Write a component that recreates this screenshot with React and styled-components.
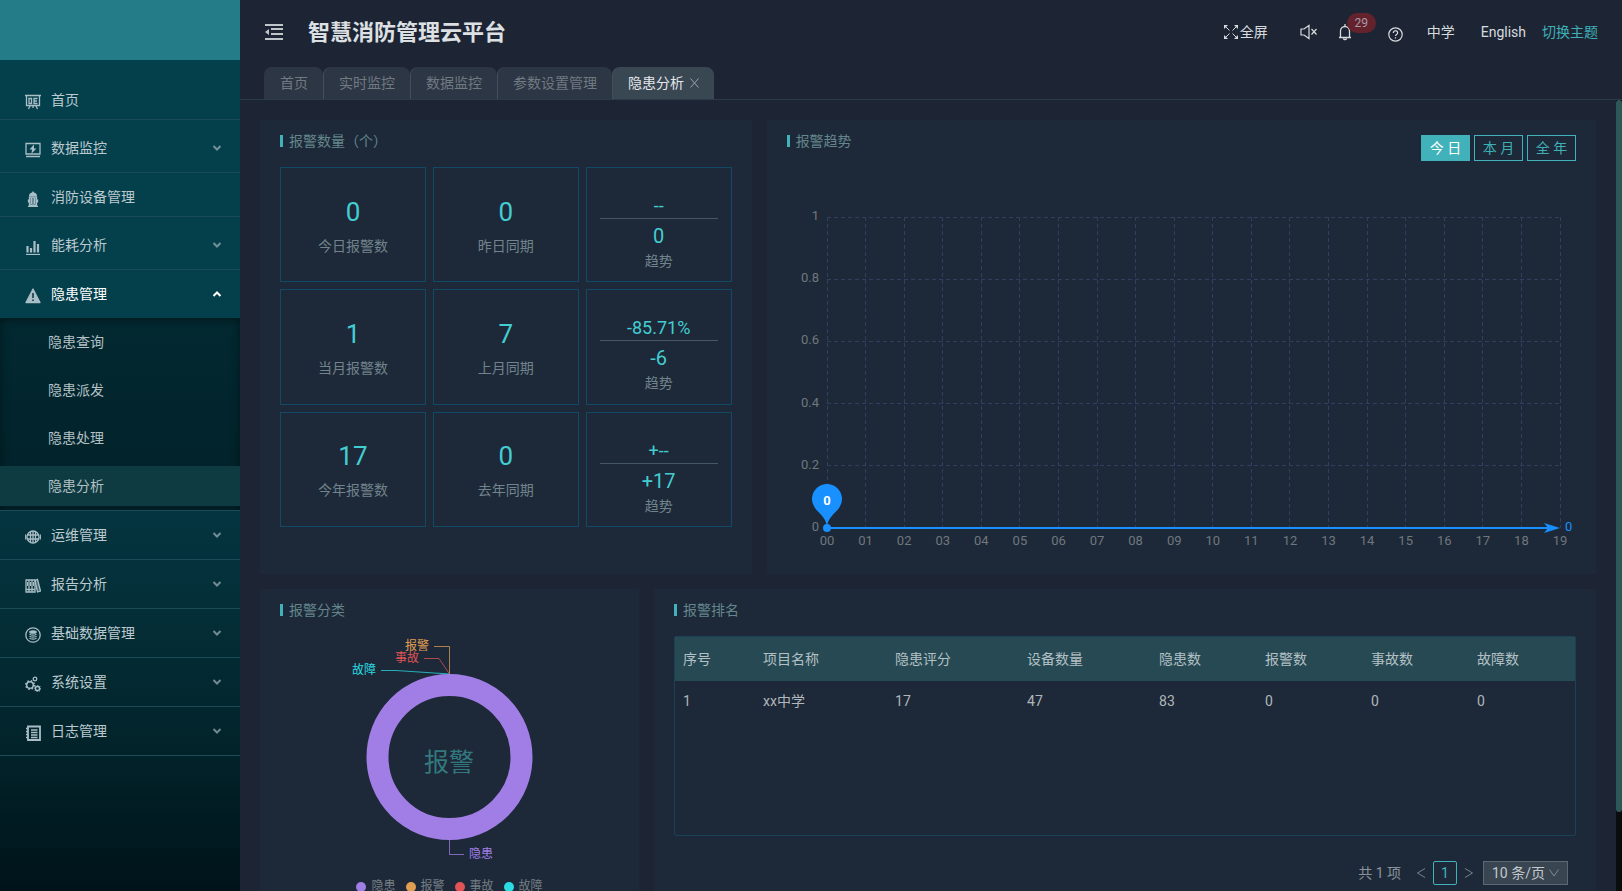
import React, { useEffect, useRef, useState } from 'react';
import styled, { createGlobalStyle } from 'styled-components';

const menus = [
  { key: 'home', name: '首页', icon: 'home', single: true },
  { key: 'data', name: '数据监控', icon: 'monitor', spaced: true },
  { key: 'device', name: '消防设备管理', icon: 'hydrant', single: true },
  { key: 'energy', name: '能耗分析', icon: 'bars' },
  {
    key: 'danger',
    name: '隐患管理',
    icon: 'warning',
    children: ['隐患查询', '隐患派发', '隐患处理', '隐患分析'],
  },
  { key: 'ops', name: '运维管理', icon: 'globe' },
  { key: 'report', name: '报告分析', icon: 'books' },
  { key: 'base', name: '基础数据管理', icon: 'database' },
  { key: 'system', name: '系统设置', icon: 'gears' },
  { key: 'log', name: '日志管理', icon: 'log' },
];

const tabs = ['首页', '实时监控', '数据监控', '参数设置管理', '隐患分析'];

const counts = [
  { value: '0', label: '今日报警数' },
  { value: '0', label: '昨日同期' },
  { rate: '--', value: '0', label: '趋势' },
  { value: '1', label: '当月报警数' },
  { value: '7', label: '上月同期' },
  { rate: '-85.71%', value: '-6', label: '趋势' },
  { value: '17', label: '今年报警数' },
  { value: '0', label: '去年同期' },
  { rate: '+--', value: '+17', label: '趋势' },
];

const legends = [
  { name: '隐患', color: '#a07ee6' },
  { name: '报警', color: '#e09e52' },
  { name: '事故', color: '#e05455' },
  { name: '故障', color: '#2adce4' },
];

const columns = [
  { title: '序号', width: 80 },
  { title: '项目名称', width: 132 },
  { title: '隐患评分', width: 132 },
  { title: '设备数量', width: 132 },
  { title: '隐患数', width: 106 },
  { title: '报警数', width: 106 },
  { title: '事故数', width: 106 },
  { title: '故障数', width: 106 },
];

const rows = [['1', 'xx中学', '17', '47', '83', '0', '0', '0']];

const MenuIcon = ({ name }) => {
  const shapes = {
    home: (
      <>
        <path d="M0 1.500h16M1.500 2v9.500h13V2M5 12l-1.500 3M11 12l1.500 3M8 12v2" />
        <path d="M4 4.500v5h2.500v-5zM12.500 4.500H9v5h3.500M9 7h3" />
      </>
    ),
    monitor: (
      <>
        <path d="M1 1.500h14v10.500H1zM1 14.500h14" />
        <path d="M9 2.500L4.500 7.500h2.500L6.500 11.500l5-5H9z" fill="currentColor" stroke="none" />
      </>
    ),
    hydrant: (
      <>
        <path d="M8 0l1 1.500c2 .5 3 1.500 3 3.500H4c0-2 1-3 3-3.500z" fill="currentColor" stroke="none" />
        <path d="M4.500 6h7v8.500h-7z" fill="currentColor" fillOpacity=".55" />
        <path d="M3.500 8.500v3M12.500 8.500v3M3 15.500h10M6.500 7v6M9.500 7v6" />
      </>
    ),
    bars: (
      <>
        <path d="M1 15.500h14" />
        <path d="M2.500 7v6.500M6 9v4.500M9.500 2v11.500M13 5v8.500" strokeWidth="2.200" />
      </>
    ),
    warning: (
      <>
        <path d="M8 1l7 13.500H1z" fill="currentColor" strokeLinejoin="round" />
        <path d="M8 5v5M8 11.500v1.500" stroke="#04323d" strokeWidth="1.500" />
      </>
    ),
    globe: (
      <>
        <circle cx="8" cy="8" r="6" />
        <path d="M8 2v12M5.500 3v10M10.500 3v10M2 6h12M2 10h12M.7 5.500v5M15.300 5.500v5" />
      </>
    ),
    books: (
      <>
        <path d="M1 2h9v12H1zM4 2v12M7 2v12M1 11.500h9" />
        <path d="M2.500 4v4M5.500 4v4M8.500 4v4" strokeWidth="1" />
        <path d="M10 2.500l2.500-1L15.500 13l-3 1z" fill="currentColor" fillOpacity=".4" />
      </>
    ),
    database: (
      <>
        <circle cx="8" cy="8" r="7.200" />
        <ellipse cx="8" cy="5" rx="3.200" ry="1.200" fill="currentColor" />
        <path d="M4.500 7c1 1.500 6 1.500 7 0M4.500 9c1 1.500 6 1.500 7 0M4.500 11c1 1.500 6 1.500 7 0" />
      </>
    ),
    gears: (
      <>
        <circle cx="5" cy="9" r="3.300" strokeWidth="1.500" />
        <circle cx="5" cy="9" r="4.400" strokeDasharray="1.500 2" />
        <circle cx="10" cy="3" r="1.800" />
        <circle cx="12.500" cy="12.500" r="2" />
        <circle cx="12.500" cy="12.500" r="2.900" strokeDasharray="1 1.200" />
      </>
    ),
    log: (
      <>
        <path d="M3 1.500h12v13.500H3z" strokeWidth="1.800" />
        <path d="M6 5h6.500M6 7.500h6.500M6 10h6.500M6 12.500h6.500M1 3.500h2M1 6.500h2M1 9.500h2M1 12.500h2" />
      </>
    ),
  };
  return (
    <MenuSvg viewBox="0 0 16 16" aria-hidden="true">
      {shapes[name]}
    </MenuSvg>
  );
};

const Sidebar = () => (
  <Aside>
    <Logo />
    <ul>
      {menus.map((menu) => (
        <MenuItem key={menu.key} $spaced={menu.single || menu.spaced}>
          <MenuButton $single={menu.single} $open={!!menu.children}>
            <MenuIcon name={menu.icon} />
            <span>{menu.name}</span>
            {!menu.single && (
              <Arrow viewBox="0 0 10 10" $open={!!menu.children} aria-hidden="true">
                <path d={menu.children ? 'M1.500 7L5 3.500 8.500 7' : 'M1.500 3L5 6.500 8.500 3'} />
              </Arrow>
            )}
          </MenuButton>
          {menu.children && (
            <SubMenu>
              {menu.children.map((child) => (
                <li key={child}>
                  <SubButton $active={child === '隐患分析'}>{child}</SubButton>
                </li>
              ))}
            </SubMenu>
          )}
        </MenuItem>
      ))}
    </ul>
  </Aside>
);

const TopBar = () => (
  <Top>
    <FoldButton aria-label="fold">
      <svg width="18" height="16" viewBox="0 0 18 16" aria-hidden="true">
        <path d="M0 0h18v2H0zM6 4h12v2H6zM6 9h12v2H6zM0 14h18v2H0zM0 8l4-3v6z" fill="currentColor" />
      </svg>
    </FoldButton>
    <PlatformTitle>智慧消防管理云平台</PlatformTitle>
    <Tool $gap={0}>
      <svg width="14" height="14" viewBox="0 0 14 14" fill="none" stroke="currentColor" aria-hidden="true">
        <path d="M1 1l4.500 4.500M13 1L8.500 5.500M1 13l4.500-4.500M13 13L8.500 8.500" />
        <path d="M0 0h4L0 4zM14 0h-4l4 4zM0 14h4l-4-4zM14 14h-4l4-4z" fill="currentColor" stroke="none" />
      </svg>
      全屏
    </Tool>
    <Tool $gap={32} aria-label="mute">
      <svg width="18" height="16" viewBox="0 0 18 16" fill="none" stroke="currentColor" aria-hidden="true">
        <path d="M1 5h3l5-3.500v13L4 11H1zM11.500 5l5 5.500M16.500 5l-5 5.500" strokeWidth="1.200" />
      </svg>
    </Tool>
    <Tool $gap={20} aria-label="notice">
      <svg width="14" height="18" viewBox="0 0 14 18" fill="none" stroke="currentColor" aria-hidden="true">
        <path d="M1 14.500h12M2.500 14.500V8a4.500 4.500 0 0 1 9 0v6.500M7 3.500V1M5.500 15.500c.3 1.500 2.700 1.500 3 0" strokeWidth="1.300" />
      </svg>
      <Badge>29</Badge>
    </Tool>
    <Tool $gap={36} aria-label="help">
      <HelpSvg viewBox="0 0 15 15" fill="none" stroke="currentColor" aria-hidden="true">
        <circle cx="7.500" cy="7.500" r="6.700" strokeWidth="1.200" />
        <path d="M5.300 6c0-3 4.400-3 4.400-.2C9.700 7.500 7.500 7.300 7.500 9M7.500 10.200v1.300" strokeWidth="1.200" />
      </HelpSvg>
    </Tool>
    <Tool $gap={24}>中学</Tool>
    <Tool $gap={26}>English</Tool>
    <Tool $gap={16} $theme>切换主题</Tool>
  </Top>
);

const TabBar = () => (
  <Tabs>
    {tabs.map((tab) => {
      const active = tab === '隐患分析';
      return (
        <Tab key={tab} $active={active}>
          {tab}
          {active && (
            <svg width="10" height="10" viewBox="0 0 10 10" stroke="#98a3ac" aria-hidden="true">
              <path d="M1.500 .5l8 9M9.500 .5l-8 9" />
            </svg>
          )}
        </Tab>
      );
    })}
  </Tabs>
);

const TrendChart = () => {
  const boxRef = useRef();
  const [width, setWidth] = useState(789);

  useEffect(() => {
    const resize = () => setWidth(boxRef.current.clientWidth);
    resize();
    window.addEventListener('resize', resize);
    return () => window.removeEventListener('resize', resize);
  }, []);

  const left = 40;
  const right = width - 16;
  const top = 56;
  const bottom = 367;
  const stepX = (right - left) / 19;
  const stepY = (bottom - top) / 5;
  const hours = Array.from({ length: 20 }, (_, i) => String(i).padStart(2, '0'));

  return (
    <div ref={boxRef}>
      <Chart width={width} height="393">
        <g stroke="#303f60" strokeDasharray="4 3" shapeRendering="crispEdges">
          {[1, 2, 3, 4, 5].map((i) => (
            <line key={i} x1={left} x2={right} y1={bottom - i * stepY} y2={bottom - i * stepY} />
          ))}
          {hours.map((hour, i) => (
            <line key={hour} x1={left + i * stepX} x2={left + i * stepX} y1={top} y2={bottom} />
          ))}
        </g>
        {['0', '0.2', '0.4', '0.6', '0.8', '1'].map((label, i) => (
          <AxisText key={label} x={left - 8} y={bottom - i * stepY + 3} textAnchor="end">
            {label}
          </AxisText>
        ))}
        {hours.map((hour, i) => (
          <AxisText key={hour} x={left + i * stepX} y={bottom + 17} textAnchor="middle">
            {hour}
          </AxisText>
        ))}
        <line x1={left} x2={right - 6} y1={bottom} y2={bottom} stroke="#1890ff" strokeWidth="2" />
        <circle cx={left} cy={bottom} r="4" fill="#1890ff" />
        <path
          transform={`translate(${left} ${bottom})`}
          d="M-12.500 -20.700A15 15 0 1 1 12.500 -20.700C8 -14 2 -12 0 -2C-2 -12 -8 -14 -12.500 -20.700z"
          fill="#1890ff"
        />
        <PinText x={left} y={bottom - 23} textAnchor="middle">0</PinText>
        <path transform={`translate(${right} ${bottom})`} d="M0 0L-16 -5L-12 0L-16 5z" fill="#1890ff" />
        <AxisText x={right + 5} y={bottom + 3} $blue>0</AxisText>
      </Chart>
    </div>
  );
};

const PieChart = () => (
  <PieBox>
    <Chart width="300" height="240">
      <circle cx="149.500" cy="121" r="72" fill="none" stroke="#a07ee6" strokeWidth="22" />
      <g fill="none" strokeOpacity=".75">
        <path d="M149.500 38V10.500H134" stroke="#e09e52" />
        <path d="M149.500 38L139 22.500H124" stroke="#e05455" />
        <path d="M149.500 38L96 34.500H81" stroke="#2adce4" />
        <path d="M149.500 204v14.500H164" stroke="#a07ee6" />
      </g>
      <PieText x="129" y="14" textAnchor="end" fill="#e09e52">报警</PieText>
      <PieText x="119" y="26" textAnchor="end" fill="#e05455">事故</PieText>
      <PieText x="76" y="38" textAnchor="end" fill="#2adce4">故障</PieText>
      <PieText x="169" y="222" fill="#a07ee6">隐患</PieText>
      <PieCenter x="149" y="135" textAnchor="middle">报警</PieCenter>
    </Chart>
    <Legend>
      {legends.map((item) => (
        <LegendItem key={item.name} $color={item.color}>{item.name}</LegendItem>
      ))}
    </Legend>
  </PieBox>
);

const RankTable = () => (
  <>
    <TableBox>
      <Table>
        <colgroup>
          {columns.map((col) => (
            <col key={col.title} width={col.width} />
          ))}
        </colgroup>
        <thead>
          <tr>
            {columns.map((col) => (
              <th key={col.title}>{col.title}</th>
            ))}
          </tr>
        </thead>
        <tbody>
          {rows.map((row) => (
            <tr key={row[0]}>
              {row.map((cell, i) => (
                <td key={i}>{cell}</td>
              ))}
            </tr>
          ))}
        </tbody>
      </Table>
    </TableBox>
    <Pagination>
      <Total>共 1 项</Total>
      <PageArrow aria-label="prev">
        <svg width="10" height="10" viewBox="0 0 10 10" aria-hidden="true"><path d="M9 .5L1.500 5 9 9.500" /></svg>
      </PageArrow>
      <PageNumber>1</PageNumber>
      <PageArrow aria-label="next">
        <svg width="10" height="10" viewBox="0 0 10 10" aria-hidden="true"><path d="M1 .5L8.500 5 1 9.500" /></svg>
      </PageArrow>
      <SizeBox>
        <select aria-label="page size" defaultValue="10">
          <option value="10">10 条/页</option>
          <option value="20">20 条/页</option>
        </select>
        <svg width="10" height="10" viewBox="0 0 10 10" aria-hidden="true"><path d="M.5 1.500L5 8l4.500-6.500" /></svg>
      </SizeBox>
    </Pagination>
  </>
);

const App = () => (
  <>
    <GlobalStyle />
    <Layout>
      <Sidebar />
      <Main>
        <TopBar />
        <TabBar />
        <Body>
          <Content>
            <Card $span={9}>
              <CardHead><CardTitle>报警数量（个）</CardTitle></CardHead>
              <CountGrid>
                {counts.map((item, i) =>
                  item.rate ? (
                    <TrendCell key={i}>
                      <Rate>{item.rate}</Rate>
                      <Diff>{item.value}</Diff>
                      <CellLabel>{item.label}</CellLabel>
                    </TrendCell>
                  ) : (
                    <CountCell key={i}>
                      <Count>{item.value}</Count>
                      <CellLabel>{item.label}</CellLabel>
                    </CountCell>
                  )
                )}
              </CountGrid>
            </Card>
            <Card $span={15}>
              <CardHead $tools>
                <CardTitle>报警趋势</CardTitle>
                <RangeGroup>
                  <RangeButton $active>今 日</RangeButton>
                  <RangeButton>本 月</RangeButton>
                  <RangeButton>全 年</RangeButton>
                </RangeGroup>
              </CardHead>
              <TrendChart />
            </Card>
            <Card $span={7}>
              <CardHead><CardTitle>报警分类</CardTitle></CardHead>
              <PieChart />
            </Card>
            <Card $span={17}>
              <CardHead><CardTitle>报警排名</CardTitle></CardHead>
              <RankTable />
            </Card>
          </Content>
          <ScrollTrack><ScrollThumb /></ScrollTrack>
        </Body>
      </Main>
    </Layout>
  </>
);

const GlobalStyle = createGlobalStyle`
  * {
    box-sizing: border-box;
  }
  body {
    margin: 0;
    background: #1d2535;
    font-family: Roboto, "Noto Sans CJK SC", sans-serif;
    font-size: 14px;
    line-height: 21px;
    color: #aeb5bc;
  }
  button, select {
    font: inherit;
    color: inherit;
    background: none;
    border: none;
    padding: 0;
    cursor: pointer;
  }
  ul {
    list-style: none;
    margin: 0;
    padding: 0;
  }
`;

const Layout = styled.div`
  display: flex;
  height: 100vh;
  overflow: hidden;
`;

const Aside = styled.aside`
  flex: 0 0 240px;
  background: linear-gradient(#043f4c 0%, #043f4c 35%, #04303a 66%, #02232a 84%, #00131a 100%);
`;

const Logo = styled.div`
  height: 60px;
  margin-bottom: 20px;
  background: #237c87;
`;

const MenuItem = styled.li`
  margin-bottom: ${(props) => (props.$spaced ? 4 : 0)}px;
  border-bottom: 1px solid #1a4b57;
`;

const MenuButton = styled.button`
  display: flex;
  align-items: center;
  gap: 10px;
  width: 100%;
  height: ${(props) => (props.$single ? 39 : 48)}px;
  padding: ${(props) => (props.$single ? 2 : 0)}px 18px 0 25px;
  color: ${(props) => (props.$open ? '#fff' : '#bccacf')};
`;

const MenuSvg = styled.svg`
  width: 16px;
  height: 16px;
  margin-top: 3px;
  fill: none;
  stroke: currentColor;
  stroke-width: 1.3;
  color: #a9bec6;
`;

const Arrow = styled.svg`
  width: 10px;
  height: 10px;
  margin-left: auto;
  fill: none;
  stroke: currentColor;
  stroke-width: 2;
  opacity: ${(props) => (props.$open ? 1 : 0.6)};
`;

const SubMenu = styled.ul`
  padding: 4px 0;
  background: rgba(0, 0, 0, 0.35);
  box-shadow: inset 0 2px 8px rgba(0, 0, 0, 0.45);
  li + li {
    margin-top: 8px;
  }
`;

const SubButton = styled.button`
  display: block;
  width: 100%;
  height: 40px;
  padding-left: 48px;
  text-align: left;
  color: #b3c0c4;
  background: ${(props) => (props.$active ? '#0e3b41' : 'none')};
`;

const Main = styled.div`
  flex: 1;
  min-width: 0;
  display: flex;
  flex-direction: column;
`;

const Top = styled.header`
  display: flex;
  align-items: center;
  height: 64px;
  padding: 0 24px 0 25px;
`;

const FoldButton = styled.button`
  display: flex;
  color: #c0c5ca;
`;

const PlatformTitle = styled.h1`
  margin: 0 auto 0 25px;
  font-size: 22px;
  line-height: 33px;
  font-weight: bold;
  color: #dde0e3;
`;

const Tool = styled.button`
  position: relative;
  display: flex;
  align-items: center;
  gap: 2px;
  margin-left: ${(props) => props.$gap}px;
  color: ${(props) => (props.$theme ? '#3fb0b6' : '#d8dbde')};
`;

const HelpSvg = styled.svg`
  width: 15px;
  height: 15px;
  margin-top: 4px;
`;

const Badge = styled.sup`
  position: absolute;
  top: -10px;
  left: 9px;
  width: 29px;
  height: 20px;
  border-radius: 10px;
  background: #64222d;
  font-size: 12px;
  line-height: 20px;
  text-align: center;
  color: #a89aa8;
`;

const Tabs = styled.nav`
  display: flex;
  align-items: flex-end;
  height: 36px;
  padding-left: 24px;
  border-bottom: 1px solid #2b3b4a;
`;

const Tab = styled.button`
  display: flex;
  align-items: center;
  gap: 5px;
  height: 32px;
  padding: 0 15px;
  border-left: 1px solid #424f5b;
  border-radius: 8px 8px 0 0;
  background: ${(props) => (props.$active ? '#394753' : '#2c3644')};
  color: ${(props) => (props.$active ? '#e4e7ea' : '#717983')};
  &:first-child {
    border-left-color: #2c3644;
  }
`;

const Body = styled.div`
  flex: 1;
  min-height: 0;
  display: flex;
`;

const Content = styled.main`
  flex: 1;
  min-width: 0;
  display: grid;
  grid-template-columns: repeat(24, minmax(0, 1fr));
  grid-template-rows: 454px 366px;
  gap: 15px;
  padding: 20px;
  overflow-y: auto;
  scrollbar-width: none;
`;

const ScrollTrack = styled.div`
  width: 6px;
  background: #0b0c0e;
`;

const ScrollThumb = styled.div`
  height: 90%;
  border-radius: 3px;
  background: #2d5858;
`;

const Card = styled.section`
  grid-column: span ${(props) => props.$span};
  padding: 15px 20px 20px;
  background: #1d2938;
`;

const CardHead = styled.div`
  display: flex;
  justify-content: space-between;
  align-items: flex-start;
  margin-bottom: ${(props) => (props.$tools ? 0 : 20)}px;
`;

const CardTitle = styled.h2`
  margin: 0;
  padding-left: 6px;
  border-left: 3px solid #41b2ba;
  font-size: 14px;
  line-height: 12px;
  font-weight: normal;
  color: #64868c;
`;

const CountGrid = styled.div`
  display: grid;
  grid-template-columns: repeat(3, minmax(0, 1fr));
  grid-auto-rows: 1fr;
  gap: 7px;
  height: 360px;
`;

const CountCell = styled.div`
  display: flex;
  flex-direction: column;
  align-items: center;
  justify-content: center;
  gap: 4px;
  border: 1px solid #124a65;
`;

const TrendCell = styled.div`
  padding: 25px 13px 0;
  border: 1px solid #124a65;
  text-align: center;
`;

const Count = styled.div`
  font-size: 26px;
  line-height: 39px;
  color: #43cdd2;
`;

const Rate = styled.div`
  border-bottom: 1px solid #445763;
  font-size: 18px;
  line-height: 25px;
  color: #43cdd2;
`;

const Diff = styled.div`
  margin-top: 2px;
  font-size: 20px;
  line-height: 30px;
  color: #43cdd2;
`;

const CellLabel = styled.div`
  color: #71838c;
`;

const RangeGroup = styled.div`
  display: flex;
  gap: 4px;
`;

const RangeButton = styled.button`
  width: 49px;
  height: 26px;
  border: 1px solid #41b2ba;
  background: ${(props) => (props.$active ? '#41b2ba' : 'none')};
  color: ${(props) => (props.$active ? '#fff' : '#3fb0b6')};
`;

const Chart = styled.svg`
  display: block;
`;

const AxisText = styled.text`
  font-size: 13px;
  fill: ${(props) => (props.$blue ? '#1890ff' : '#70777d')};
`;

const PinText = styled.text`
  font-size: 13px;
  font-weight: bold;
  fill: #fff;
`;

const PieBox = styled.div`
  display: flex;
  flex-direction: column;
  align-items: center;
`;

const PieText = styled.text`
  font-size: 12px;
`;

const PieCenter = styled.text`
  font-size: 25px;
  fill: #32797f;
`;

const Legend = styled.ul`
  display: flex;
  gap: 10px;
`;

const LegendItem = styled.li`
  display: flex;
  align-items: center;
  gap: 5px;
  font-size: 12px;
  color: #757d84;
  &::before {
    content: '';
    width: 10px;
    height: 10px;
    border-radius: 50%;
    background: ${(props) => props.$color};
  }
`;

const TableBox = styled.div`
  height: 200px;
  border: 1px solid #1a4257;
  border-radius: 2px;
`;

const Table = styled.table`
  width: 100%;
  table-layout: fixed;
  border-collapse: collapse;
  th, td {
    height: 40px;
    padding: 0 8px;
    text-align: left;
    font-weight: normal;
    color: #b0b6bc;
  }
  th {
    height: 44px;
    background: #264954;
    color: #b4c0c4;
  }
`;

const Pagination = styled.div`
  display: flex;
  align-items: center;
  justify-content: flex-end;
  height: 24px;
  margin: 25px 8px 0 0;
`;

const Total = styled.span`
  margin-right: 8px;
  color: #8a939c;
`;

const PageArrow = styled.button`
  display: flex;
  align-items: center;
  justify-content: center;
  width: 24px;
  height: 24px;
  svg {
    fill: none;
    stroke: #77828d;
  }
`;

const PageNumber = styled.button`
  width: 24px;
  height: 24px;
  border: 1px solid #41b2ba;
  border-radius: 2px;
  color: #41b2ba;
`;

const SizeBox = styled.div`
  position: relative;
  margin-left: 2px;
  select {
    display: block;
    appearance: none;
    width: 85px;
    height: 24px;
    padding: 0 0 0 8px;
    border: 1px solid #5d6873;
    background: #3a4552;
    color: #c3c8cd;
  }
  svg {
    position: absolute;
    top: 7px;
    right: 9px;
    fill: none;
    stroke: #808a94;
    pointer-events: none;
  }
`;

export default App;
